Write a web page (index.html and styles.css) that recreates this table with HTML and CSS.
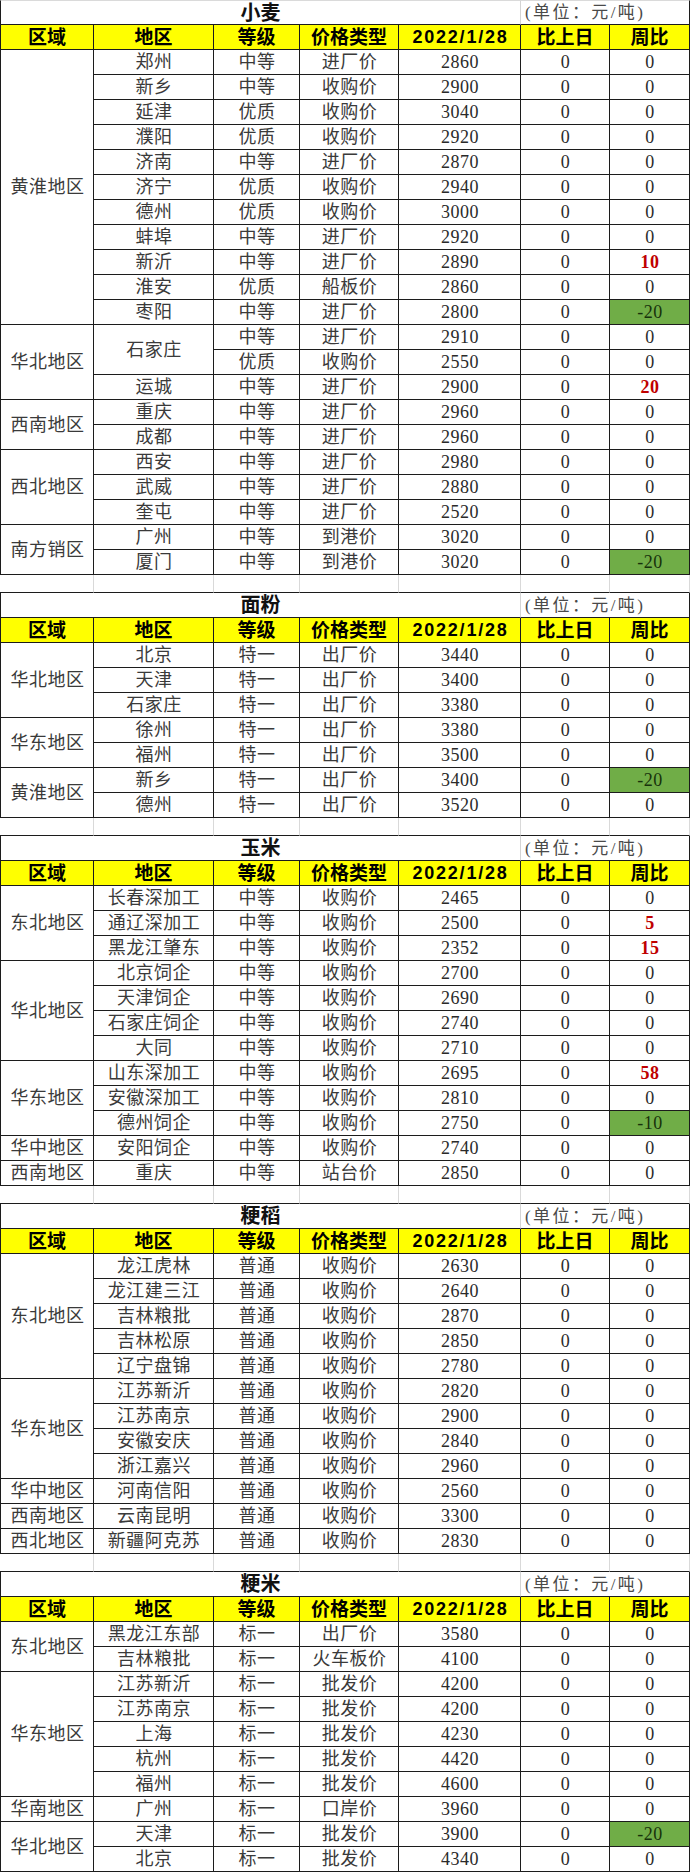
FILE: index.html
```html
<!DOCTYPE html>
<html lang="zh-CN">
<head>
<meta charset="utf-8">
<title>粮食价格</title>
<link rel="stylesheet" href="styles.css">
</head>
<body>
<table class="sheet">
<colgroup>
<col class="c-area"><col class="c-city"><col class="c-grade"><col class="c-type"><col class="c-price"><col class="c-day"><col class="c-week">
</colgroup>
<tbody>
<!-- 小麦 -->
<tr class="title first"><td colspan="5" class="t-name">小麦</td><td colspan="2" class="t-unit">(单位：元/吨)</td></tr>
<tr class="hdr"><td>区域</td><td>地区</td><td>等级</td><td>价格类型</td><td class="date">2022/1/28</td><td>比上日</td><td>周比</td></tr>
<tr><td rowspan="11" class="region">黄淮地区</td><td>郑州</td><td>中等</td><td>进厂价</td><td class="num">2860</td><td class="num">0</td><td class="num">0</td></tr>
<tr><td>新乡</td><td>中等</td><td>收购价</td><td class="num">2900</td><td class="num">0</td><td class="num">0</td></tr>
<tr><td>延津</td><td>优质</td><td>收购价</td><td class="num">3040</td><td class="num">0</td><td class="num">0</td></tr>
<tr><td>濮阳</td><td>优质</td><td>收购价</td><td class="num">2920</td><td class="num">0</td><td class="num">0</td></tr>
<tr><td>济南</td><td>中等</td><td>进厂价</td><td class="num">2870</td><td class="num">0</td><td class="num">0</td></tr>
<tr><td>济宁</td><td>优质</td><td>收购价</td><td class="num">2940</td><td class="num">0</td><td class="num">0</td></tr>
<tr><td>德州</td><td>优质</td><td>收购价</td><td class="num">3000</td><td class="num">0</td><td class="num">0</td></tr>
<tr><td>蚌埠</td><td>中等</td><td>进厂价</td><td class="num">2920</td><td class="num">0</td><td class="num">0</td></tr>
<tr><td>新沂</td><td>中等</td><td>进厂价</td><td class="num">2890</td><td class="num">0</td><td class="num up">10</td></tr>
<tr><td>淮安</td><td>优质</td><td>船板价</td><td class="num">2860</td><td class="num">0</td><td class="num">0</td></tr>
<tr><td>枣阳</td><td>中等</td><td>进厂价</td><td class="num">2800</td><td class="num">0</td><td class="num down">-20</td></tr>
<tr><td rowspan="3" class="region">华北地区</td><td rowspan="2">石家庄</td><td>中等</td><td>进厂价</td><td class="num">2910</td><td class="num">0</td><td class="num">0</td></tr>
<tr><td>优质</td><td>收购价</td><td class="num">2550</td><td class="num">0</td><td class="num">0</td></tr>
<tr><td>运城</td><td>中等</td><td>进厂价</td><td class="num">2900</td><td class="num">0</td><td class="num up">20</td></tr>
<tr><td rowspan="2" class="region">西南地区</td><td>重庆</td><td>中等</td><td>进厂价</td><td class="num">2960</td><td class="num">0</td><td class="num">0</td></tr>
<tr><td>成都</td><td>中等</td><td>进厂价</td><td class="num">2960</td><td class="num">0</td><td class="num">0</td></tr>
<tr><td rowspan="3" class="region">西北地区</td><td>西安</td><td>中等</td><td>进厂价</td><td class="num">2980</td><td class="num">0</td><td class="num">0</td></tr>
<tr><td>武威</td><td>中等</td><td>进厂价</td><td class="num">2880</td><td class="num">0</td><td class="num">0</td></tr>
<tr><td>奎屯</td><td>中等</td><td>进厂价</td><td class="num">2520</td><td class="num">0</td><td class="num">0</td></tr>
<tr><td rowspan="2" class="region">南方销区</td><td>广州</td><td>中等</td><td>到港价</td><td class="num">3020</td><td class="num">0</td><td class="num">0</td></tr>
<tr><td>厦门</td><td>中等</td><td>到港价</td><td class="num">3020</td><td class="num">0</td><td class="num down">-20</td></tr>
<tr class="gap"><td></td><td></td><td></td><td></td><td></td><td></td><td></td></tr>

<!-- 面粉 -->
<tr class="title"><td colspan="5" class="t-name">面粉</td><td colspan="2" class="t-unit">(单位：元/吨)</td></tr>
<tr class="hdr"><td>区域</td><td>地区</td><td>等级</td><td>价格类型</td><td class="date">2022/1/28</td><td>比上日</td><td>周比</td></tr>
<tr><td rowspan="3" class="region">华北地区</td><td>北京</td><td>特一</td><td>出厂价</td><td class="num">3440</td><td class="num">0</td><td class="num">0</td></tr>
<tr><td>天津</td><td>特一</td><td>出厂价</td><td class="num">3400</td><td class="num">0</td><td class="num">0</td></tr>
<tr><td>石家庄</td><td>特一</td><td>出厂价</td><td class="num">3380</td><td class="num">0</td><td class="num">0</td></tr>
<tr><td rowspan="2" class="region">华东地区</td><td>徐州</td><td>特一</td><td>出厂价</td><td class="num">3380</td><td class="num">0</td><td class="num">0</td></tr>
<tr><td>福州</td><td>特一</td><td>出厂价</td><td class="num">3500</td><td class="num">0</td><td class="num">0</td></tr>
<tr><td rowspan="2" class="region">黄淮地区</td><td>新乡</td><td>特一</td><td>出厂价</td><td class="num">3400</td><td class="num">0</td><td class="num down">-20</td></tr>
<tr><td>德州</td><td>特一</td><td>出厂价</td><td class="num">3520</td><td class="num">0</td><td class="num">0</td></tr>
<tr class="gap"><td></td><td></td><td></td><td></td><td></td><td></td><td></td></tr>

<!-- 玉米 -->
<tr class="title"><td colspan="5" class="t-name">玉米</td><td colspan="2" class="t-unit">(单位：元/吨)</td></tr>
<tr class="hdr"><td>区域</td><td>地区</td><td>等级</td><td>价格类型</td><td class="date">2022/1/28</td><td>比上日</td><td>周比</td></tr>
<tr><td rowspan="3" class="region">东北地区</td><td>长春深加工</td><td>中等</td><td>收购价</td><td class="num">2465</td><td class="num">0</td><td class="num">0</td></tr>
<tr><td>通辽深加工</td><td>中等</td><td>收购价</td><td class="num">2500</td><td class="num">0</td><td class="num up">5</td></tr>
<tr><td>黑龙江肇东</td><td>中等</td><td>收购价</td><td class="num">2352</td><td class="num">0</td><td class="num up">15</td></tr>
<tr><td rowspan="4" class="region">华北地区</td><td>北京饲企</td><td>中等</td><td>收购价</td><td class="num">2700</td><td class="num">0</td><td class="num">0</td></tr>
<tr><td>天津饲企</td><td>中等</td><td>收购价</td><td class="num">2690</td><td class="num">0</td><td class="num">0</td></tr>
<tr><td>石家庄饲企</td><td>中等</td><td>收购价</td><td class="num">2740</td><td class="num">0</td><td class="num">0</td></tr>
<tr><td>大同</td><td>中等</td><td>收购价</td><td class="num">2710</td><td class="num">0</td><td class="num">0</td></tr>
<tr><td rowspan="3" class="region">华东地区</td><td>山东深加工</td><td>中等</td><td>收购价</td><td class="num">2695</td><td class="num">0</td><td class="num up">58</td></tr>
<tr><td>安徽深加工</td><td>中等</td><td>收购价</td><td class="num">2810</td><td class="num">0</td><td class="num">0</td></tr>
<tr><td>德州饲企</td><td>中等</td><td>收购价</td><td class="num">2750</td><td class="num">0</td><td class="num down">-10</td></tr>
<tr><td class="region">华中地区</td><td>安阳饲企</td><td>中等</td><td>收购价</td><td class="num">2740</td><td class="num">0</td><td class="num">0</td></tr>
<tr><td class="region">西南地区</td><td>重庆</td><td>中等</td><td>站台价</td><td class="num">2850</td><td class="num">0</td><td class="num">0</td></tr>
<tr class="gap"><td></td><td></td><td></td><td></td><td></td><td></td><td></td></tr>

<!-- 粳稻 -->
<tr class="title"><td colspan="5" class="t-name">粳稻</td><td colspan="2" class="t-unit">(单位：元/吨)</td></tr>
<tr class="hdr"><td>区域</td><td>地区</td><td>等级</td><td>价格类型</td><td class="date">2022/1/28</td><td>比上日</td><td>周比</td></tr>
<tr><td rowspan="5" class="region">东北地区</td><td>龙江虎林</td><td>普通</td><td>收购价</td><td class="num">2630</td><td class="num">0</td><td class="num">0</td></tr>
<tr><td>龙江建三江</td><td>普通</td><td>收购价</td><td class="num">2640</td><td class="num">0</td><td class="num">0</td></tr>
<tr><td>吉林粮批</td><td>普通</td><td>收购价</td><td class="num">2870</td><td class="num">0</td><td class="num">0</td></tr>
<tr><td>吉林松原</td><td>普通</td><td>收购价</td><td class="num">2850</td><td class="num">0</td><td class="num">0</td></tr>
<tr><td>辽宁盘锦</td><td>普通</td><td>收购价</td><td class="num">2780</td><td class="num">0</td><td class="num">0</td></tr>
<tr><td rowspan="4" class="region">华东地区</td><td>江苏新沂</td><td>普通</td><td>收购价</td><td class="num">2820</td><td class="num">0</td><td class="num">0</td></tr>
<tr><td>江苏南京</td><td>普通</td><td>收购价</td><td class="num">2900</td><td class="num">0</td><td class="num">0</td></tr>
<tr><td>安徽安庆</td><td>普通</td><td>收购价</td><td class="num">2840</td><td class="num">0</td><td class="num">0</td></tr>
<tr><td>浙江嘉兴</td><td>普通</td><td>收购价</td><td class="num">2960</td><td class="num">0</td><td class="num">0</td></tr>
<tr><td class="region">华中地区</td><td>河南信阳</td><td>普通</td><td>收购价</td><td class="num">2560</td><td class="num">0</td><td class="num">0</td></tr>
<tr><td class="region">西南地区</td><td>云南昆明</td><td>普通</td><td>收购价</td><td class="num">3300</td><td class="num">0</td><td class="num">0</td></tr>
<tr><td class="region">西北地区</td><td>新疆阿克苏</td><td>普通</td><td>收购价</td><td class="num">2830</td><td class="num">0</td><td class="num">0</td></tr>
<tr class="gap"><td></td><td></td><td></td><td></td><td></td><td></td><td></td></tr>

<!-- 粳米 -->
<tr class="title"><td colspan="5" class="t-name">粳米</td><td colspan="2" class="t-unit">(单位：元/吨)</td></tr>
<tr class="hdr"><td>区域</td><td>地区</td><td>等级</td><td>价格类型</td><td class="date">2022/1/28</td><td>比上日</td><td>周比</td></tr>
<tr><td rowspan="2" class="region">东北地区</td><td>黑龙江东部</td><td>标一</td><td>出厂价</td><td class="num">3580</td><td class="num">0</td><td class="num">0</td></tr>
<tr><td>吉林粮批</td><td>标一</td><td>火车板价</td><td class="num">4100</td><td class="num">0</td><td class="num">0</td></tr>
<tr><td rowspan="5" class="region">华东地区</td><td>江苏新沂</td><td>标一</td><td>批发价</td><td class="num">4200</td><td class="num">0</td><td class="num">0</td></tr>
<tr><td>江苏南京</td><td>标一</td><td>批发价</td><td class="num">4200</td><td class="num">0</td><td class="num">0</td></tr>
<tr><td>上海</td><td>标一</td><td>批发价</td><td class="num">4230</td><td class="num">0</td><td class="num">0</td></tr>
<tr><td>杭州</td><td>标一</td><td>批发价</td><td class="num">4420</td><td class="num">0</td><td class="num">0</td></tr>
<tr><td>福州</td><td>标一</td><td>批发价</td><td class="num">4600</td><td class="num">0</td><td class="num">0</td></tr>
<tr><td class="region">华南地区</td><td>广州</td><td>标一</td><td>口岸价</td><td class="num">3960</td><td class="num">0</td><td class="num">0</td></tr>
<tr><td rowspan="2" class="region">华北地区</td><td>天津</td><td>标一</td><td>批发价</td><td class="num">3900</td><td class="num">0</td><td class="num down">-20</td></tr>
<tr><td>北京</td><td>标一</td><td>批发价</td><td class="num">4340</td><td class="num">0</td><td class="num">0</td></tr>
</tbody>
</table>
</body>
</html>
```

FILE: styles.css
```css
html, body {
  margin: 0;
  padding: 0;
  background: #ffffff;
}

.sheet {
  border-collapse: separate;
  border-spacing: 0;
  table-layout: fixed;
  width: 690px;
}

.c-area  { width: 94px; }
.c-city  { width: 120px; }
.c-grade { width: 86px; }
.c-type  { width: 99px; }
.c-price { width: 122px; }
.c-day   { width: 89px; }
.c-week  { width: 80px; }

.sheet tr { height: 25px; }

.sheet td {
  box-sizing: border-box;
  padding: 0 0 0 1px;
  border-right: 1px solid #1c1c1c;
  border-bottom: 1px solid #1c1c1c;
  text-align: center;
  vertical-align: middle;
  white-space: nowrap;
  overflow: hidden;
  font-family: "Liberation Serif", "Noto Sans CJK SC", serif;
  font-size: 18px;
  font-weight: 400;
  line-height: 1;
  letter-spacing: 0.5px;
  color: #3a3a3a;
}

.sheet td.region {
  border-left: 1px solid #1c1c1c;
}

.sheet td.num {
  font-size: 18px;
  letter-spacing: 0.5px;
  color: #2a2a2a;
}

.sheet td.up {
  color: #c00000;
  font-weight: 700;
}

.sheet td.down {
  background: #70ad47;
  color: #17320b;
}

/* title rows */
.sheet .title td {
  color: #111111;
}

.sheet .title .t-name {
  border-left: 1px solid #1c1c1c;
  border-right: 1px solid #d4d4d4;
  font-weight: 700;
  font-size: 20px;
  letter-spacing: 0;
  padding-left: 0;
}

.sheet .title .t-unit {
  text-align: left;
  padding-left: 4px;
  color: #4a4a4a;
  font-size: 17px;
  letter-spacing: 2.4px;
}

.sheet .title.first td {
  border-top: 1px solid #dadada;
}

/* header rows */
.sheet .hdr td {
  background: #ffff00;
  color: #000000;
  font-weight: 700;
  font-size: 19px;
  letter-spacing: 0;
  padding-left: 0;
}

.sheet .hdr td:first-child {
  border-left: 1px solid #1c1c1c;
}

.sheet .hdr td.date {
  font-family: "Liberation Sans", "Noto Sans CJK SC", sans-serif;
  font-size: 18px;
  letter-spacing: 1.8px;
  padding-left: 2px;
}

/* spacer rows between blocks */
.sheet tr.gap { height: 18px; }

.sheet .gap td {
  border-right: 1px solid #d9d9d9;
}
```
